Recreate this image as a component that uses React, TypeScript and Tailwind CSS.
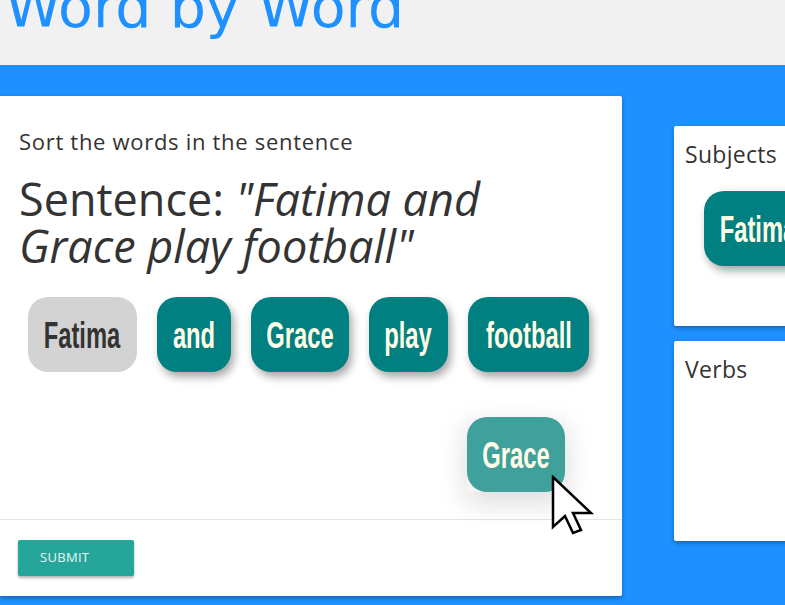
import React from "react";

const chipFont = { fontFamily: '"Liberation Sans", Arial, sans-serif' };

function Word({ word }: { word: string }) {
  return (
    <span className="inline-block scale-x-[0.66] scale-y-[1.05] whitespace-nowrap" style={chipFont}>
      {word}
    </span>
  );
}

function Chip({ word, w, gray = false }: { word: string; w: string; gray?: boolean }) {
  return (
    <div
      className={
        "h-[75px] shrink-0 rounded-[20px] flex items-center justify-center text-[36px] font-bold " +
        w +
        " " +
        (gray ? "bg-[#d3d3d3] text-[#333333]" : "bg-[#008080] text-[#fffde7] shadow-[3px_5px_8px_rgba(0,0,0,0.35)]")
      }
    >
      <Word word={word} />
    </div>
  );
}

export default function App() {
  return (
    <div className="w-[785px] h-[605px] overflow-hidden bg-[#1e90ff] relative" style={{ fontFamily: '"Open Sans", "Noto Sans", sans-serif' }}>
      <div className="h-[65px] bg-[#f1f1f1] overflow-hidden relative">
        <div className="absolute left-[5px] top-[-33px] text-[57px] leading-[80px] text-[#1e90ff] whitespace-nowrap" style={{ fontFamily: '"DejaVu Sans", sans-serif' }}>
          Word by Word
        </div>
      </div>
      <div className="flex pt-[31px] gap-[52px]">
        <div className="w-[622px] h-[500px] shrink-0 bg-white rounded-r-[2px] shadow-[0_2px_4px_rgba(0,0,0,0.3)] flex flex-col">
          <div className="flex-1 relative px-[19px] pt-[31px]">
            <div className="text-[22px] leading-[28px] tracking-[0.7px] text-[#333] whitespace-nowrap">Sort the words in the sentence</div>
            <div className="mt-[20px] text-[45px] leading-[47px] text-[#333] whitespace-nowrap">
              Sentence: <i>"Fatima and</i>
              <br />
              <i>Grace play football"</i>
            </div>
            <div className="mt-[28px] ml-[9px] flex gap-[20px]">
              <Chip word="Fatima" w="w-[109px]" gray />
              <Chip word="and" w="w-[74px]" />
              <Chip word="Grace" w="w-[98px]" />
              <Chip word="play" w="w-[79px]" />
              <Chip word="football" w="w-[121px]" />
            </div>
            <div className="absolute left-[467px] top-[321px] w-[98px] h-[75px] bg-[#f5f5f5] shadow-[0_10px_30px_rgba(0,0,0,0.15)]">
              <div className="w-full h-full rounded-[20px] bg-[#40a09c] text-[#fffde7] flex items-center justify-center text-[36px] font-bold">
                <Word word="Grace" />
              </div>
            </div>
            <svg className="absolute left-[551px] top-[379px]" width="44" height="60" viewBox="0 0 44 60">
              <path d="M2 2 L2 52 L14 41 L22 58 L30 55 L22 38 L40 38 Z" fill="white" stroke="black" strokeWidth="2.5" strokeLinejoin="miter" />
            </svg>
          </div>
          <div className="h-[77px] border-t border-[#e5e5e5] px-[18px] pt-[20px]">
            <button
              className="w-[116px] h-[36px] bg-[#26a69a] rounded-[2px] text-[13px] text-left pl-[22px] text-white/90 tracking-[0.3px] shadow-[0_2px_3px_rgba(0,0,0,0.3)]"
            >
              SUBMIT
            </button>
          </div>
        </div>
        <div className="flex flex-col gap-[15px] pt-[30px] shrink-0">
          <div className="w-[200px] h-[200px] bg-white rounded-[2px] shadow-[0_2px_4px_rgba(0,0,0,0.3)] px-[11px] pt-[14px]">
            <div className="text-[23px] leading-[28px] tracking-[0.3px] text-[#333]">Subjects</div>
            <div className="mt-[23px] ml-[19px] flex">
              <Chip word="Fatima" w="w-[109px]" />
            </div>
          </div>
          <div className="w-[200px] h-[200px] bg-white rounded-[2px] shadow-[0_2px_4px_rgba(0,0,0,0.3)] px-[11px] pt-[14px]">
            <div className="text-[23px] leading-[28px] tracking-[0.3px] text-[#333]">Verbs</div>
          </div>
        </div>
      </div>
    </div>
  );
}
